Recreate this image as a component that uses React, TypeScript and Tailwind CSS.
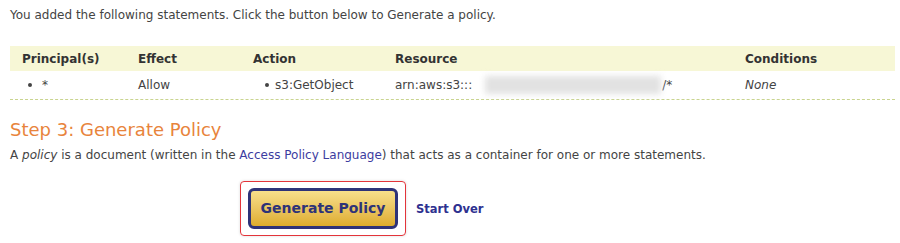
import React from 'react';

const font = { fontFamily: '"DejaVu Sans", Verdana, sans-serif' };

export default function App() {
  return (
    <div className="w-[900px] h-[243px] bg-white text-[12px] text-[#444] overflow-hidden" style={font}>
      <p className="pl-[10px] pt-[7px] leading-[16px]">
        You added the following statements. Click the button below to Generate a policy.
      </p>

      {/* statements table */}
      <div className="ml-[10px] mr-[5px] mt-[23px]">
        <div className="flex h-[25px] items-center bg-[#f7f7d6] font-bold text-[#333]">
          <div className="w-[128px] pl-[12px]">Principal(s)</div>
          <div className="w-[115px]">Effect</div>
          <div className="w-[142px]">Action</div>
          <div className="w-[350px]">Resource</div>
          <div className="flex-1">Conditions</div>
        </div>
        <div className="flex h-[29px] items-center border-b border-dashed border-[#c9d48f]">
          <div className="w-[128px] pl-[18px] flex items-center gap-[10px]">
            <span className="w-[4px] h-[4px] rounded-full bg-[#444]" />
            <span>*</span>
          </div>
          <div className="w-[115px]">Allow</div>
          <div className="w-[142px] pl-[12px] flex items-center gap-[6px]">
            <span className="w-[4px] h-[4px] rounded-full bg-[#444]" />
            <span>s3:GetObject</span>
          </div>
          <div className="w-[350px] flex items-center">
            <span>arn:aws:s3:::</span>
            <span className="relative inline-block w-[176px] h-[18px] ml-[13px] mr-[1px]">
              <span className="absolute inset-0 bg-[#e2e2e2] blur-[3px]" />
            </span>
            <span>/*</span>
          </div>
          <div className="flex-1 italic">None</div>
        </div>
      </div>

      <h2 className="pl-[10px] mt-[18px] text-[18px] leading-[24px] text-[#e8843c]">Step 3: Generate Policy</h2>
      <p className="pl-[10px] mt-[5px] leading-[16px]">
        A <i>policy</i> is a document (written in the{' '}
        <a className="text-[#3c3ca0]">Access Policy Language</a>) that acts as a container for one or more statements.
      </p>

      <div className="flex items-center mt-[18px] ml-[240px]">
        <div className="border border-[#e3343a] rounded-[4px] px-[7px] py-[6px] shadow-[0_0_3px_rgba(0,0,0,0.15)]">
          <button className="w-[150px] h-[41px] rounded-[6px] border-[3px] border-[#2e3378] bg-gradient-to-b from-[#f8e08a] to-[#deac2a] text-[14px] font-bold text-[#2e3378]">
            Generate Policy
          </button>
        </div>
        <a className="ml-[10px] mt-[2px] font-bold text-[11.5px] text-[#2e3190]">Start Over</a>
      </div>
    </div>
  );
}
